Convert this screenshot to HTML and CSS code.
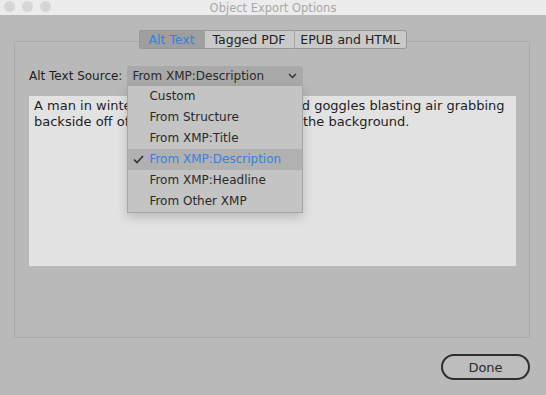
FILE: index.html
```html
<!DOCTYPE html>
<html lang="en">
<head>
  <meta charset="UTF-8" />
  <title>Object Export Options</title>
  <link rel="stylesheet" href="styles.css">
</head>
<body>

  <div class="titlebar">
    <div class="lights">
      <span></span><span></span><span></span>
    </div>
    <div class="title">Object Export Options</div>
  </div>

  <div class="window">
    <div class="tabs">
      <div class="tab active">Alt Text</div>
      <div class="tab">Tagged PDF</div>
      <div class="tab last">EPUB and HTML</div>
    </div>

    <div class="group">
      <div class="row">
        <label>Alt Text Source:</label>
        <div class="select">
          <span>From XMP:Description</span>
          <svg class="chev" width="9" height="6" viewBox="0 0 9 6">
            <path d="M1 1 L4.5 4.5 L8 1" fill="none" stroke="#333" stroke-width="1.4"/>
          </svg>
          <div class="menu">
            <div class="item">Custom</div>
            <div class="item">From Structure</div>
            <div class="item">From XMP:Title</div>
            <div class="item checked">
              <svg class="check" width="11" height="9" viewBox="0 0 11 9">
                <path d="M1 4.5 L4 7.5 L10 1" fill="none" stroke="#333" stroke-width="1.6"/>
              </svg>
              From XMP:Description
            </div>
            <div class="item">From XMP:Headline</div>
            <div class="item">From Other XMP</div>
          </div>
        </div>
      </div>
      <div class="textarea">A man in winter clothes with a helmet and goggles blasting air grabbing backside off of a jump with mountains in the background.</div>
    </div>

    <div class="footer">
      <button class="done">Done</button>
    </div>
  </div>

</body>
</html>
```

FILE: styles.css
```css
body {
  margin: 0;
  font-family: "DejaVu Sans", sans-serif;
  font-size: 12px;
  background: #b9b9b9;
  color: #262626;
  height: 395px;
  overflow: hidden;
}
.titlebar {
  height: 15px;
  background: #ececec;
  position: relative;
  display: flex;
  align-items: center;
  justify-content: center;
}
.lights {
  position: absolute;
  left: 4px;
  top: 1px;
  display: flex;
  gap: 7px;
}
.lights span {
  width: 11px;
  height: 11px;
  border-radius: 50%;
  background: #d6d6d6;
}
.title {
  color: #a8a8a8;
  font-size: 11.5px;
}
.window {
  padding: 15px 16px 0 14px;
}
.tabs {
  display: flex;
  justify-content: center;
  position: relative;
  z-index: 1;
  margin-left: 1px;
}
.tab {
  height: 17px;
  line-height: 17px;
  font-size: 12.5px;
  background: #c9c9c9;
  border: 1px solid #989898;
  border-right: none;
  text-align: center;
  color: #222;
}
.tab:nth-child(1) { width: 64px; border-radius: 3px 0 0 3px; }
.tab:nth-child(2) { width: 89px; border-left-color: #a4a4a4; }
.tab:nth-child(3) { width: 111px; border-left-color: #a4a4a4; }
.tab.last {
  border-right: 1px solid #989898;
  border-radius: 0 3px 3px 0;
}
.tab.active {
  background: #9f9f9f;
  color: #3483dc;
}
.group {
  margin-top: -8px;
  border: 1px solid #a9a9a9;
  border-radius: 3px;
  height: 271px;
  padding: 24px 14px 0 14px;
}
.row {
  display: flex;
  align-items: center;
  gap: 5px;
}
.row label {
  font-size: 12px;
  color: #1e1e1e;
}
.select {
  position: relative;
  width: 171px;
  height: 20px;
  padding-left: 5px;
  background: #a9a9a9;
  border-radius: 3px 3px 0 0;
  display: flex;
  align-items: center;
  justify-content: space-between;
  font-size: 12px;
  color: #2a2a2a;
}
.chev {
  margin-right: 6px;
}
.menu {
  position: absolute;
  top: 20px;
  left: 0;
  width: 176px;
  background: #c4c4c4;
  box-shadow: 0 4px 10px rgba(0, 0, 0, 0.18);
  border: 1px solid #a6a6a6;
  border-top: none;
  box-sizing: border-box;
  z-index: 2;
}
.item {
  position: relative;
  height: 21px;
  line-height: 21px;
  padding-left: 21px;
  font-size: 12px;
  color: #2a2a2a;
}
.item.checked {
  background: #b1b1b1;
  color: #3483dc;
}
.check {
  position: absolute;
  left: 5px;
  top: 6px;
}
.textarea {
  margin-top: 10px;
  width: 482px;
  height: 166px;
  background: #e2e2e2;
  padding: 2px 0 2px 5px;
  font-size: 13px;
  line-height: 16px;
  color: #1e1e1e;
}
.footer {
  display: flex;
  justify-content: flex-end;
  margin-top: 16px;
}
.done {
  width: 89px;
  height: 26px;
  border: 2px solid #2e2e2e;
  border-radius: 13px;
  background: #bdbdbd;
  font-family: "DejaVu Sans", sans-serif;
  font-size: 13px;
  color: #2a2a2a;
}
```
